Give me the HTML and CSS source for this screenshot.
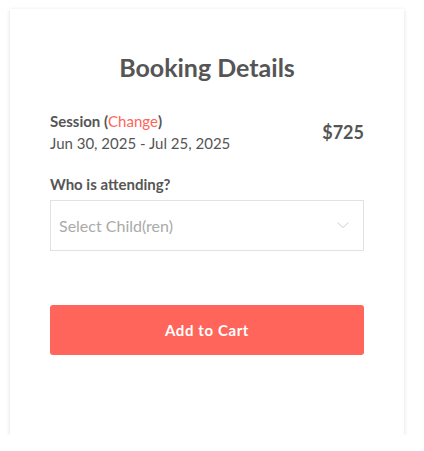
FILE: index.html
```html
<!DOCTYPE html>
<html>
<head>
<meta charset="utf-8">
<link rel="stylesheet" href="styles.css">
</head>
<body>
<div class="card">
  <h2 class="title">Booking Details</h2>
  <div class="session">
    <div class="session-info">
      <div class="session-label">Session (<a class="change" href="#">Change</a>)</div>
      <div class="session-dates">Jun 30, 2025 - Jul 25, 2025</div>
    </div>
    <div class="price">$725</div>
  </div>
  <div class="field-label">Who is attending?</div>
  <div class="select">
    <span class="placeholder">Select Child(ren)</span>
    <svg class="chevron" width="12" height="7" viewBox="0 0 12 7"><path d="M0.5 0.5 L6 5.5 L11.5 0.5" fill="none" stroke="#cfcfcf" stroke-width="1"/></svg>
  </div>
  <button class="cart-btn">Add to Cart</button>
</div>
</body>
</html>
```
FILE: styles.css
```css
html, body {
  margin: 0;
  padding: 0;
  background: #fff;
}
body {
  padding: 9px 0 0 10px;
  font-family: Lato, "Noto Sans", sans-serif;
  color: #555;
}
.card {
  width: 394px;
  height: 426px;
  box-sizing: border-box;
  padding: 0 40px;
  background: #fff;
  box-shadow: 0 1px 4px rgba(0,0,0,0.14);
  display: flex;
  flex-direction: column;
}
.title {
  margin: 42px 0 0;
  text-align: center;
  font-size: 25px;
  font-weight: 700;
  line-height: 32px;
  color: #555;
}
.session {
  margin-top: 27px;
  display: flex;
  justify-content: space-between;
  align-items: center;
}
.session-label {
  font-size: 15px;
  font-weight: 700;
  line-height: 22px;
}
.change {
  color: #ff6459;
  text-decoration: none;
  font-weight: 400;
}
.session-dates {
  font-size: 15px;
  line-height: 22px;
}
.price {
  font-size: 18px;
  font-weight: 700;
}
.field-label {
  margin-top: 19px;
  font-size: 15px;
  font-weight: 700;
  line-height: 22px;
}
.select {
  margin-top: 5px;
  height: 51px;
  box-sizing: border-box;
  border: 1px solid #e2e2e2;
  display: flex;
  align-items: center;
  justify-content: space-between;
  padding: 0 14px 0 8px;
}
.placeholder {
  font-size: 16px;
  color: #aaa;
}
.chevron {
  display: block;
}
.cart-btn {
  margin-top: 54px;
  height: 50px;
  border: none;
  border-radius: 3px;
  background: #ff655a;
  color: #fff;
  font-family: Lato, "Noto Sans", sans-serif;
  font-size: 15px;
  font-weight: 700;
  letter-spacing: 0.6px;
}
```
